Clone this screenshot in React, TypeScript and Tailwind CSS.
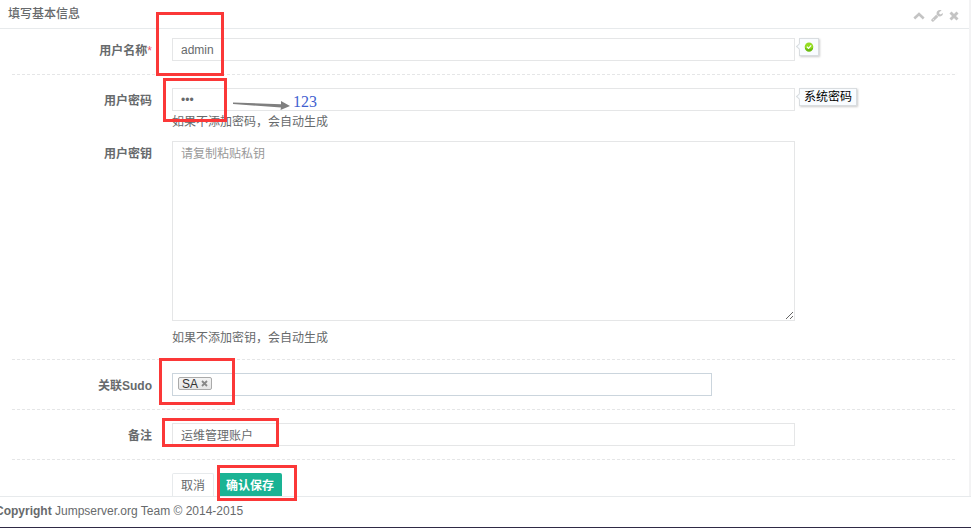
import { useState } from "react";
import type { ReactNode } from "react";

interface FieldRowProps {
  label: ReactNode;
  htmlFor: string;
  tip?: ReactNode;
  children: ReactNode;
}

function FieldRow({ label, htmlFor, tip, children }: FieldRowProps) {
  return (
    <div className="grid grid-cols-[160fr_623fr_161fr]">
      <label htmlFor={htmlFor} className="pt-[5px] pr-5 text-right font-bold">
        {label}
      </label>
      <div className="relative">{children}</div>
      <div className="pl-1">{tip}</div>
    </div>
  );
}

function Divider() {
  return (
    <svg className="my-[13px] block h-px w-full" aria-hidden="true">
      <line x1="0" y1="0.5" x2="100%" y2="0.5" stroke="#e5e6e7" strokeDasharray="3 2" />
    </svg>
  );
}

// Red frame drawn over a field to point it out
function Highlight({ className }: { className: string }) {
  return <span className={`pointer-events-none absolute z-20 border-3 border-[#fb3838] ${className}`} />;
}

function Tip({ children }: { children: ReactNode }) {
  return (
    <span className="relative inline-flex h-[18px] items-center border border-[#d9dde0] bg-[#f9fcff] px-1 text-black shadow-[1px_1px_2px_#cccccc]">
      <span className="absolute top-[5px] -left-[3px] size-[5px] rotate-45 border-b border-l border-[#d9dde0] bg-[#f9fcff]" />
      {children}
    </span>
  );
}

function OkIcon() {
  return (
    <svg width="10" height="10" viewBox="0 0 10 10" role="img" aria-label="ok">
      <circle cx="5" cy="4.8" r="4.3" fill="#93dc22" />
      <path d="M0.8 5.500a4.200 4.200 0 0 0 8.400 0c-2 1.800-6.400 1.800-8.400 0z" fill="#6cbb10" />
      <path d="M2.900 4.700l1.600 1.600 2.700-2.900" fill="none" stroke="#fff" strokeWidth="1.200" />
    </svg>
  );
}

const inputClass =
  "block h-[23px] w-full border border-[#e5e6e7] bg-white px-2 text-xs text-[#676a6c] outline-none";

export default function App() {
  const [username, setUsername] = useState("admin");
  const [password, setPassword] = useState("123");
  const [privateKey, setPrivateKey] = useState("");
  const [comment, setComment] = useState("运维管理账户");
  const [sudo, setSudo] = useState(["SA"]);

  return (
    <div className="overflow-x-hidden border-b border-[#2f2a45] bg-white font-['Liberation_Sans','Noto_Sans_CJK_SC',sans-serif] text-xs text-[#676a6c]">
      <div className="border-r-2 border-[#f3f3f4]">
        <div className="flex h-[29px] items-center justify-between border-b border-[#e7eaec] pr-[10px] pl-2">
          <h5 className="font-medium">填写基本信息</h5>
          <div className="flex items-center gap-[6px] pt-1 text-[#c4c4c4]">
            <button type="button" aria-label="收起">
              <svg width="12" height="12" viewBox="0 0 12 12">
                <path d="M1.300 8.500L6 4l4.700 4.500" fill="none" stroke="currentColor" strokeWidth="2.600" />
              </svg>
            </button>
            <button type="button" aria-label="设置">
              <svg width="12" height="12" viewBox="0 0 1664 1664" fill="currentColor">
                <path d="M384 1344q0-26-19-45t-45-19-45 19-19 45 19 45 45 19 45-19 19-45zm644-420l-682 682q-37 37-90 37-52 0-91-37l-106-108q-38-36-38-90 0-53 38-91l681-681q39 98 114.500 173.500t173.500 114.500zm634-435q0 39-23 106-47 134-164.500 217.500t-258.500 83.500q-185 0-316.500-131.500t-131.500-316.500 131.500-316.500 316.500-131.500q58 0 121.500 16.500t107.500 46.500q16 11 16 28t-16 28l-293 169v224l193 107q5-3 79-48.500t135.500-81 70.500-35.500q15 0 23.500 10t8.500 25z" />
              </svg>
            </button>
            <button type="button" aria-label="关闭">
              <svg width="10" height="10" viewBox="0 0 10 10">
                <path d="M1.5 1.500l7 7m0-7l-7 7" fill="none" stroke="currentColor" strokeWidth="2.900" />
              </svg>
            </button>
          </div>
        </div>

        <form className="pt-[9px] pr-[13px] pl-3" onSubmit={(e) => e.preventDefault()}>
          <FieldRow
            htmlFor="username"
            label={<>用户名称<span className="font-normal text-[#ed5565]">*</span></>}
            tip={<Tip><OkIcon /></Tip>}
          >
            <input id="username" className={inputClass} value={username} onChange={(e) => setUsername(e.target.value)} />
            <Highlight className="-top-[26px] -left-4 h-16 w-[68px]" />
          </FieldRow>
          <Divider />

          <FieldRow htmlFor="password" label="用户密码" tip={<Tip>系统密码</Tip>}>
            <input
              id="password"
              type="password"
              className={inputClass}
              value={password}
              onChange={(e) => setPassword(e.target.value)}
            />
            <p className="pt-[3px] leading-4">如果不添加密码，会自动生成</p>
            <Highlight className="-top-[10px] -left-[9px] h-11 w-16" />
            <div className="absolute top-[2px] left-[61px] flex items-center">
              <svg width="57" height="18" viewBox="0 0 57 18" fill="#7f7f7f" aria-hidden="true">
                <path d="M0 9.500l48 1.700L48 8l9 5-9.500 4L48 14.500L0 11z" />
              </svg>
              <span className="pl-[3px] font-['Liberation_Serif',serif] text-base leading-6 text-[#3f5fd0]">123</span>
            </div>
          </FieldRow>

          <div className="pt-[11px]">
            <FieldRow htmlFor="private-key" label="用户密钥">
              <textarea
                id="private-key"
                className="block h-[180px] w-full resize border border-[#e5e6e7] bg-white px-2 py-1 text-xs text-[#676a6c] outline-none placeholder:text-[#999999]"
                placeholder="请复制粘贴私钥"
                value={privateKey}
                onChange={(e) => setPrivateKey(e.target.value)}
              />
              <p className="pt-[9px] leading-4">如果不添加密钥，会自动生成</p>
            </FieldRow>
          </div>
          <Divider />

          <FieldRow htmlFor="sudo" label="关联Sudo">
            <div className="flex h-[23px] w-[540px] max-w-full items-center border border-[#cbd5dd] px-[5px]">
              {sudo.map((name) => (
                <span
                  key={name}
                  className="mb-[2px] flex h-[13px] items-center gap-[3px] rounded-xs border border-[#aaaaaa] bg-linear-to-b from-[#f4f4f4] to-[#e6e6e6] px-[3px] leading-3 text-[#333333]"
                >
                  {name}
                  <button type="button" aria-label={`删除 ${name}`} onClick={() => setSudo(sudo.filter((s) => s !== name))}>
                    <svg width="7" height="7" viewBox="0 0 7 7">
                      <path d="M1 1l5 5m0-5L1 6" stroke="#888888" strokeWidth="1.800" />
                    </svg>
                  </button>
                </span>
              ))}
              <input id="sudo" className="min-w-0 flex-1 pl-1 outline-none" />
            </div>
            <Highlight className="-top-[15px] -left-[13px] h-[47px] w-[76px]" />
          </FieldRow>
          <Divider />

          <FieldRow htmlFor="comment" label="备注">
            <input id="comment" className={inputClass} value={comment} onChange={(e) => setComment(e.target.value)} />
            <Highlight className="-top-[5px] -left-[10px] h-[29px] w-[117px]" />
          </FieldRow>
          <Divider />

          <div className="grid grid-cols-[160fr_784fr]">
            <div className="col-start-2 flex gap-1">
              <button type="button" className="h-[23px] rounded-t-xs border border-b-0 border-[#e7eaec] bg-white px-2 pt-[2px]">
                取消
              </button>
              <div className="relative">
                <button type="submit" className="h-[23px] rounded-t-xs bg-[#1ab394] px-2 pt-[2px] font-bold text-white">
                  确认保存
                </button>
                <Highlight className="-top-2 -left-px h-9 w-20" />
              </div>
            </div>
          </div>
        </form>
      </div>

      <footer className="-ml-[5px] border-t border-[#e7eaec] pt-[6px] pb-2 leading-4">
        <strong>Copyright</strong> Jumpserver.org Team © 2014-2015
      </footer>
    </div>
  );
}
